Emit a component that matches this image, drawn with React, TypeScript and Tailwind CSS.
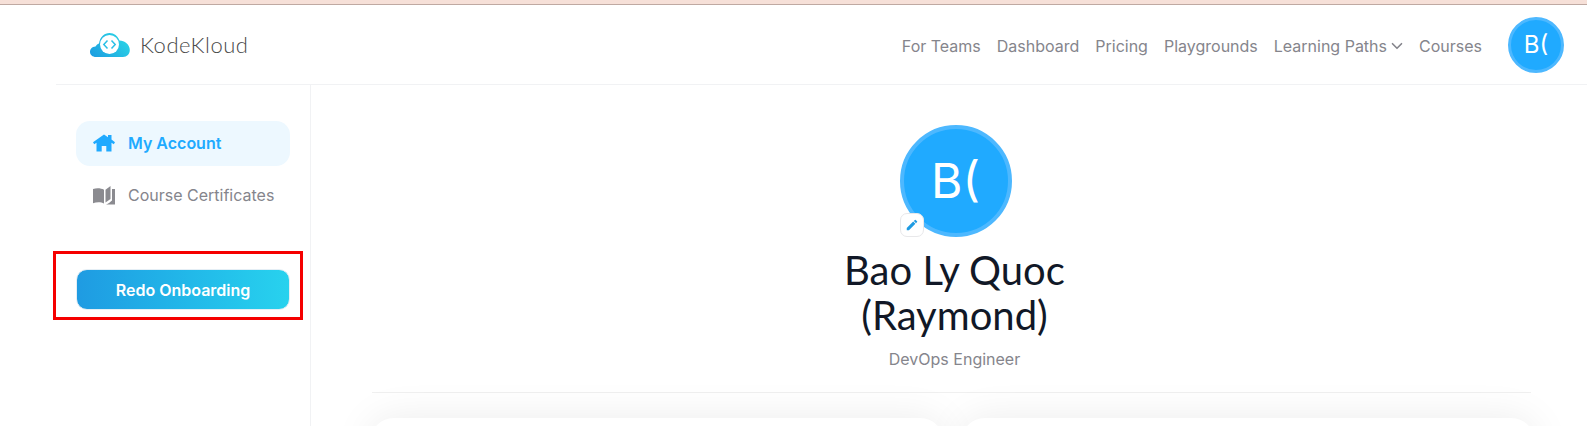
import { MdEdit } from "react-icons/md";
import { ChevronDown } from "lucide-react";

const navLinks = ["For Teams", "Dashboard", "Pricing", "Playgrounds", "Learning Paths", "Courses"];

function Logo() {
  return (
    <div className="flex items-center gap-[10px]">
      <svg width="40" height="26" viewBox="0 0 40 26" fill="none">
        <defs>
          <linearGradient id="cloud" x1="0" y1="1" x2="1" y2="0.4">
            <stop offset="0" stopColor="#1b9be0" />
            <stop offset="1" stopColor="#2bd3e6" />
          </linearGradient>
        </defs>
        <path
          d="M6 25C2.500 25 0 22.800 0 20C0 17 2 14.800 5.500 14.500C6 13.500 7.500 12 9 11.500C10 5 14.500 1 19.500 1C24 1 28 4 29.500 8.500C34.500 8.500 39.800 12.500 39.800 18C39.800 22 37 25 33 25Z"
          fill="url(#cloud)"
        />
        <circle cx="19.500" cy="12.500" r="9.500" fill="white" />
        <path d="M17.500 8.500L13.800 12.500L17.500 16.500M21.500 8.500L25.200 12.500L21.500 16.500" stroke="#29bfe6" strokeWidth="1.500" />
      </svg>
      <span className="font-['Lato',sans-serif] text-[22px] font-light tracking-[0.5px] text-[#4a4a4a]">KodeKloud</span>
    </div>
  );
}

function HomeIcon() {
  return (
    <svg width="22" height="18" viewBox="0 0 22 18" fill="#20aaff">
      <path d="M11 0.500L15 3.200V1H18.500V5.600L22 8.200L20.800 10.300L18.500 8.800V17.500H13.300V12H8.700V17.500H3.500V8.800L1.200 10.300L0 8.200Z" />
    </svg>
  );
}

function BookIcon() {
  return (
    <svg width="22" height="19" viewBox="0 0 22 19" fill="#8b8b90">
      <path d="M0 3C3.500 1.800 8 2 11 3.800V17.500C8 16 3.500 16 0 17.300Z" />
      <path d="M12.500 3.800L17.500 0V13L12.500 16.500Z" />
      <path d="M19 3H22V18.500H13C15.500 17.500 17.500 16 19 14.500Z" />
    </svg>
  );
}

export default function App() {
  return (
    <div className="h-[426px] w-[1587px] overflow-hidden bg-white font-['Inter',sans-serif]">
      <div className="h-[5px] border-b border-[#bfa9a2] bg-[#f6e0d8]" />

      {/* Top nav */}
      <header className="ml-[56px] flex h-[80px] items-center justify-between border-b border-[#f1f2f4] pl-[34px] pr-[23px]">
        <Logo />
        <nav className="flex items-center gap-4 text-[16px] text-[#85858c]">
          {navLinks.map((link) => (
            <a key={link} className="mt-[3px] flex items-center">
              {link}
              {link === "Learning Paths" && <ChevronDown size={18} strokeWidth={2.2} className="-mr-[3px] ml-[1px]" />}
            </a>
          ))}
          <div className="ml-[10px] flex h-[56px] w-[56px] items-center justify-center rounded-full border-[3px] border-[#4db8ff] bg-[#20aaff] text-[24px] text-white">
            B(
          </div>
        </nav>
      </header>

      <div className="ml-[53px] flex">
        {/* Sidebar */}
        <aside className="h-[341px] w-[258px] shrink-0 border-r border-[#f1f2f4] pt-[36px]">
          <div className="ml-[23px] w-[214px]">
            <div className="flex h-[45px] items-center gap-[13px] rounded-[14px] bg-[#edf8ff] pb-[2px] pl-[17px] text-[16px] font-semibold text-[#20aaff]">
              <HomeIcon />
              My Account
            </div>
            <div className="mt-[7px] flex h-[44px] items-center gap-[13px] pl-[17px] text-[16px] text-[#85858c]">
              <BookIcon />
              Course Certificates
            </div>
          </div>
          <div className="mt-[34px] w-[250px] border-[3px] border-[#f50000] pb-[7px] pl-[20px] pt-[15px]">
            <button className="h-[41px] w-[214px] rounded-[11px] border border-[#e4eef5] bg-gradient-to-r from-[#1f9be2] to-[#28d2ee] text-[16px] font-semibold text-white">
              Redo Onboarding
            </button>
          </div>
        </aside>

        {/* Profile */}
        <main className="min-w-0 flex-1 pl-[61px] pr-[56px] pt-[40px]">
          <div className="flex flex-col items-center pl-[6px]">
            <div className="relative ml-[2px]">
              <div className="flex h-[112px] w-[112px] items-center justify-center rounded-full border-[4px] border-[#4db8ff] bg-[#20aaff] text-[48px] text-white">
                B(
              </div>
              <div className="absolute bottom-0 left-0 flex h-[24px] w-[24px] items-center justify-center rounded-[7px] border border-[#e8e8ea] bg-white text-[#1f9be2]">
                <MdEdit size={14} />
              </div>
            </div>
            <h1 className="mt-[11px] text-center font-['Lato',sans-serif] text-[40px] leading-[45px] text-[#111827]">
              Bao Ly Quoc
              <br />
              (Raymond)
            </h1>
            <p className="mt-[9px] text-[16px] text-[#85858c]">DevOps Engineer</p>
          </div>

          <div className="mt-[21px] h-[1px] bg-[#f0f0f0]" />

          <div className="-ml-[2px] -mr-[4px] mt-[25px] grid grid-cols-2 gap-[17px]">
            <div className="h-[60px] rounded-[24px] bg-white shadow-[0_0_40px_rgba(0,0,0,0.08)]" />
            <div className="h-[60px] rounded-[24px] bg-white shadow-[0_0_40px_rgba(0,0,0,0.08)]" />
          </div>
        </main>
      </div>
    </div>
  );
}
